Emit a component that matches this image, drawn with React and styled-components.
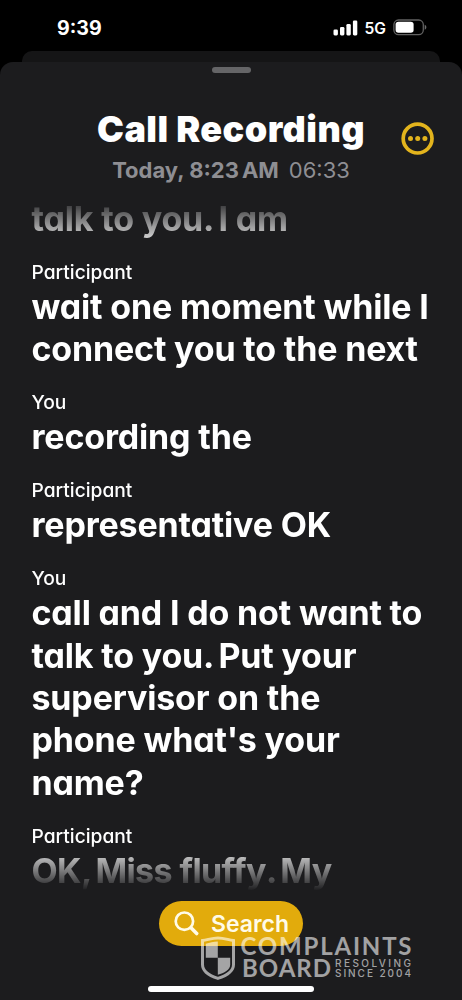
import React from 'react'
import styled, { createGlobalStyle } from 'styled-components'

const transcript = [
	{ lines: ['talk to you. I am'] },
	{ speaker: 'Participant', lines: ['wait one moment while I', 'connect you to the next'] },
	{ speaker: 'You', lines: ['recording the'] },
	{ speaker: 'Participant', lines: ['representative OK'] },
	{
		speaker: 'You',
		lines: ['call and I do not want to', 'talk to you. Put your', 'supervisor on the', "phone what's your", 'name?']
	},
	{ speaker: 'Participant', lines: ['OK, Miss fluffy. My'], tight: true }
]

// the space after a comma or a full stop is narrower than the others
const withTightStops = line => line.split(/([,.] )/).map((part, i) => (
	i % 2 ? <Stop key={i}>{part}</Stop> : part
))

const App = () => {
	return (
		<Screen>
			<GlobalStyle/>
			<StatusBar>
				<Clock>9:39</Clock>
				<StatusIcons>
					<SignalIcon/>
					<Network>5G</Network>
					<BatteryIcon/>
				</StatusIcons>
			</StatusBar>
			<BackCard/>
			<Sheet>
				<Grabber/>
				<Header>
					<Titles>
						<Title>Call Recording</Title>
						<Subtitle>
							<When>Today, 8:23<Thin/>AM</When>
							<Duration>06:33</Duration>
						</Subtitle>
					</Titles>
					<MoreButton aria-label='More'>
						<MoreIcon/>
					</MoreButton>
				</Header>
				<Transcript>
					{transcript.map(({ speaker, lines, tight }, i) => (
						<Entry key={i}>
							{speaker && <Speaker>{speaker}</Speaker>}
							{lines.map(line => <Line key={line} $tight={tight}>{withTightStops(line)}</Line>)}
						</Entry>
					))}
				</Transcript>
				<SearchButton>
					<SearchIcon/>
					<span>Search</span>
				</SearchButton>
				<HomeIndicator/>
			</Sheet>
			<Watermark/>
		</Screen>
	)
}

const SignalIcon = () => (
	<svg width='25' height='16' viewBox='0 0 25 16' fill='#fff'>
		<rect x='0.5' y='9.4' width='4.4' height='6' rx='1.3'/>
		<rect x='7' y='7' width='4.4' height='8.4' rx='1.3'/>
		<rect x='13.4' y='4' width='4.4' height='11.4' rx='1.3'/>
		<rect x='19.9' y='0.5' width='4.4' height='14.9' rx='1.3'/>
	</svg>
)

const BatteryIcon = () => (
	<svg width='34' height='17' viewBox='0 0 34 17'>
		<rect x='0.9' y='1' width='29.4' height='14.6' rx='4.6' fill='none' stroke='#fff' strokeOpacity='0.38' strokeWidth='1.3'/>
		<rect x='2.6' y='2.8' width='18' height='11' rx='2.8' fill='#fff'/>
		<path d='M31.7 5.8 C33.9 6.6 33.9 10 31.7 10.8 Z' fill='#fff' fillOpacity='0.42'/>
	</svg>
)

const MoreIcon = () => (
	<svg width='34' height='34' viewBox='0 0 34 34' fill='#e3b41d'>
		<circle cx='16.6' cy='16.6' r='14.4' fill='none' stroke='#e3b41d' strokeWidth='3.7'/>
		<circle cx='9.5' cy='16.6' r='2.5'/>
		<circle cx='16.7' cy='16.6' r='2.5'/>
		<circle cx='23.9' cy='16.6' r='2.5'/>
	</svg>
)

const SearchIcon = () => (
	<svg width='25' height='25' viewBox='0 0 25 25' fill='none' stroke='#fffbe8' strokeLinecap='round'>
		<circle cx='10.4' cy='10.2' r='8.7' strokeWidth='2.7'/>
		<path d='M17 16.8 L22.7 22.6' strokeWidth='3.5'/>
	</svg>
)

const Watermark = () => (
	<WatermarkSvg viewBox='0 0 213 48' fill='#fff' fillOpacity='0.6'>
		<path
			d='M2.5 5.6 C7.5 5 12 2.9 18 2.9 C24 2.9 28.5 5 33.5 5.6 V29.5 C33.5 37 25.5 41 17.9 43.4 C10.3 41 2.5 37 2.5 29.5 Z'
			fill='none'
			stroke='#fff'
			strokeOpacity='0.6'
			strokeWidth='3'
		/>
		<path d='M5.8 8.8 C9.8 8 13.3 6.7 17.8 6.6 V22.8 H5.8 Z'/>
		<path d='M17.8 22.8 H30.2 V29.5 C30.2 35 24 38 17.8 39.8 Z'/>
		<MarkName x='40.5' y='19.6' textLength='171' lengthAdjust='spacing'>COMPLAINTS</MarkName>
		<MarkName x='42' y='41.8' textLength='89' lengthAdjust='spacing'>BOARD</MarkName>
		<MarkTag x='135' y='31.8' textLength='76'>RESOLVING</MarkTag>
		<MarkTag x='135' y='42' textLength='76'>SINCE 2004</MarkTag>
	</WatermarkSvg>
)

const GlobalStyle = createGlobalStyle`
	* {
		box-sizing: border-box;
	}
	body {
		margin: 0;
		background-color: #000;
		font-family: Inter, 'Liberation Sans', sans-serif;
	}
`

const Screen = styled.div`
	position: relative;
	width: 462px;
	height: 1000px;
	display: flex;
	flex-direction: column;
	background-color: #000;
	overflow: hidden;
`

const StatusBar = styled.div`
	height: 51px;
	flex-shrink: 0;
	display: flex;
	align-items: center;
	justify-content: space-between;
	padding: 4px 35px 0 57px;
	color: #fff;
`

const Clock = styled.span`
	margin-top: 1px;
	font-size: 19.6px;
	font-weight: 700;
`

const StatusIcons = styled.div`
	display: flex;
	align-items: center;
`

const Network = styled.span`
	margin: 1px 7px 0 7px;
	font-size: 15.6px;
	font-weight: 600;
`

const BackCard = styled.div`
	height: 11px;
	flex-shrink: 0;
	margin: 0 22px;
	border-radius: 10px 10px 0 0;
	background-color: #151516;
`

const Sheet = styled.div`
	flex: 1;
	display: flex;
	flex-direction: column;
	align-items: center;
	border-radius: 13px 13px 0 0;
	background-color: #1c1c1e;
`

const Grabber = styled.div`
	width: 39px;
	height: 6px;
	margin-top: 5px;
	border-radius: 3px;
	background-color: #656567;
`

const Header = styled.div`
	width: 100%;
	height: 122px;
	display: grid;
	grid-template-columns: 1fr 61px;
	padding: 34px 0 0 61px;
`

const Titles = styled.div`
	display: flex;
	flex-direction: column;
	align-items: center;
`

const Title = styled.h1`
	margin: 0;
	font-size: 36px;
	font-weight: 900;
	line-height: 44px;
	letter-spacing: 0.45px;
	white-space: nowrap;
	color: #fff;
`

const Subtitle = styled.div`
	display: flex;
	gap: 10px;
	margin-top: 5px;
	font-size: 22px;
	line-height: 28px;
	white-space: nowrap;
	color: #8e8e93;
`

const When = styled.span`
	font-weight: 700;
`

const Thin = styled.span`
	display: inline-block;
	width: 3px;
`

const Duration = styled.span`
	font-weight: 400;
`

const MoreButton = styled.button`
	width: 34px;
	height: 34px;
	margin-top: 15px;
	padding: 0;
	border: none;
	background-color: transparent;
`

const Transcript = styled.div`
	width: 100%;
	height: 700px;
	padding: 2.8px 0 0 31.5px;
	overflow: hidden;
	font-feature-settings: 'cv11' 1;
	color: #fff;
	mask-image: linear-gradient(to bottom, transparent 2px, #000 54px, #000 648px, transparent 696px);
`

const Entry = styled.div`
	padding-bottom: 19.5px;
`

const Speaker = styled.div`
	margin-bottom: 2.1px;
	font-size: 19.2px;
	font-weight: 500;
	line-height: 24px;
`

const Line = styled.div`
	font-size: 34px;
	font-weight: 700;
	line-height: 42.4px;
	letter-spacing: ${({ $tight }) => $tight ? '-0.6px' : '-0.17px'};
	white-space: nowrap;
`

const Stop = styled.span`
	word-spacing: -2.7px;
`

const SearchButton = styled.button`
	width: 144px;
	height: 45px;
	display: flex;
	align-items: center;
	gap: 12px;
	margin-top: 6px;
	padding: 0 0 0 15px;
	border: none;
	border-radius: 23px;
	background-color: #e2ab0c;
	font-family: inherit;
	font-size: 23px;
	font-weight: 600;
	color: #fffbe8;
`

const HomeIndicator = styled.div`
	width: 166px;
	height: 6px;
	margin-top: 39.5px;
	border-radius: 3px;
	background-color: #fff;
`

/* stamp laid over the bottom of the sheet */
const WatermarkSvg = styled.svg`
	position: absolute;
	left: 200px;
	top: 935px;
	width: 213px;
	height: 48px;
`

const MarkName = styled.text`
	font-family: Lato, sans-serif;
	font-size: 24px;
	font-weight: 700;
`

const MarkTag = styled.text`
	font-family: Inter, sans-serif;
	font-size: 10px;
	font-weight: 500;
`

export default App
